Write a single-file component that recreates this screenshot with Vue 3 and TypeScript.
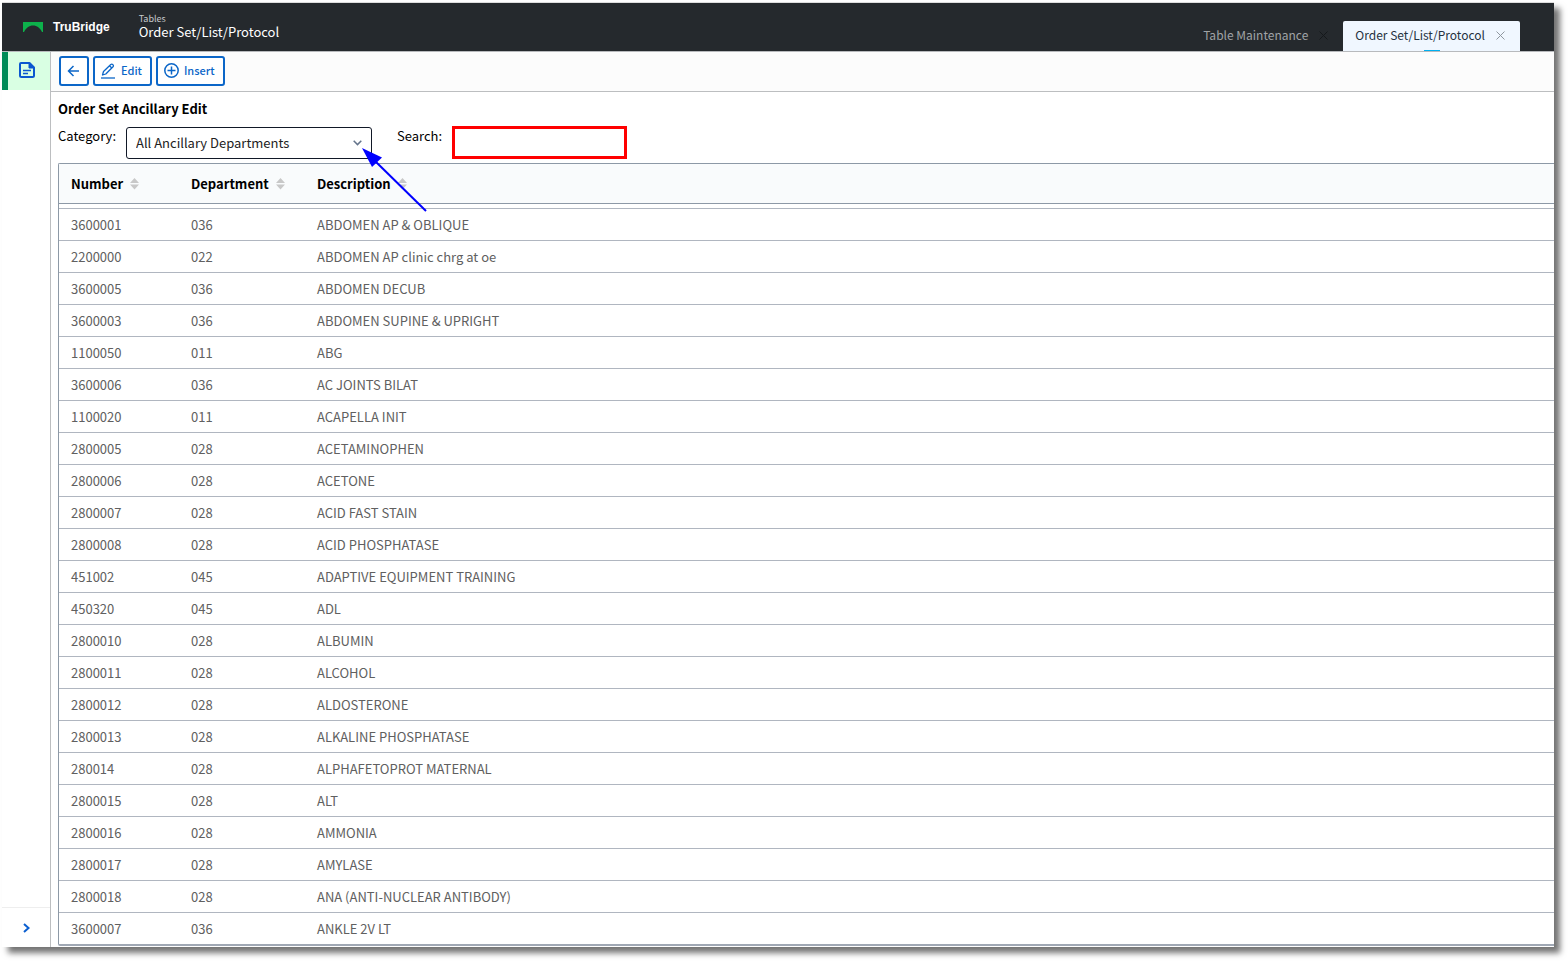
<script setup lang="ts">
import { ref } from 'vue'

interface OrderRow {
  number: string
  department: string
  description: string
}

const columns: string[] = ['Number', 'Department', 'Description']
const category = ref('all')
const search = ref('')

const rows: OrderRow[] = [
  ['3600001', '036', 'ABDOMEN AP & OBLIQUE'],
  ['2200000', '022', 'ABDOMEN AP clinic chrg at oe'],
  ['3600005', '036', 'ABDOMEN DECUB'],
  ['3600003', '036', 'ABDOMEN SUPINE & UPRIGHT'],
  ['1100050', '011', 'ABG'],
  ['3600006', '036', 'AC JOINTS BILAT'],
  ['1100020', '011', 'ACAPELLA INIT'],
  ['2800005', '028', 'ACETAMINOPHEN'],
  ['2800006', '028', 'ACETONE'],
  ['2800007', '028', 'ACID FAST STAIN'],
  ['2800008', '028', 'ACID PHOSPHATASE'],
  ['451002', '045', 'ADAPTIVE EQUIPMENT TRAINING'],
  ['450320', '045', 'ADL'],
  ['2800010', '028', 'ALBUMIN'],
  ['2800011', '028', 'ALCOHOL'],
  ['2800012', '028', 'ALDOSTERONE'],
  ['2800013', '028', 'ALKALINE PHOSPHATASE'],
  ['280014', '028', 'ALPHAFETOPROT MATERNAL'],
  ['2800015', '028', 'ALT'],
  ['2800016', '028', 'AMMONIA'],
  ['2800017', '028', 'AMYLASE'],
  ['2800018', '028', 'ANA (ANTI-NUCLEAR ANTIBODY)'],
  ['3600007', '036', 'ANKLE 2V LT'],
].map(([number, department, description]) => ({ number, department, description }))
</script>

<template>
  <div class="page">
    <div class="window">
      <header class="topbar">
        <svg class="logo" width="20" height="10" viewBox="0 0 20 10" aria-hidden="true">
          <path d="M0 0H20V10H19C17 6 14 3.500 10 3.500S3 6 1 10H0Z" fill="#0db14b" />
        </svg>
        <span class="brand">TruBridge</span>
        <div class="titles">
          <span class="crumb">Tables</span>
          <span class="title">Order Set/List/Protocol</span>
        </div>
        <nav class="tabs" aria-label="Open tabs">
          <div class="tab">
            <a href="#">Table Maintenance</a>
            <button type="button" class="close" aria-label="Close Table Maintenance">
              <svg width="9" height="9" viewBox="0 0 9 9"><path d="M.5 .5L8.5 8.5M8.5 .5L.5 8.5" /></svg>
            </button>
          </div>
          <div class="tab active">
            <a href="#" aria-current="page">Order Set/List/Protocol</a>
            <button type="button" class="close" aria-label="Close Order Set/List/Protocol">
              <svg width="9" height="9" viewBox="0 0 9 9"><path d="M.5 .5L8.5 8.5M8.5 .5L.5 8.5" /></svg>
            </button>
          </div>
        </nav>
      </header>

      <div class="body">
        <aside class="sidebar">
          <button type="button" class="side-item" aria-label="Document">
            <svg width="16" height="16" viewBox="0 0 16 16" fill="none" stroke="#0b57d0" stroke-width="2" stroke-linejoin="round">
              <path d="M2 1H10.5L15 5.5V13.5Q15 15 13.500 15H2.500Q1 15 1 13.500V2Q1 1 2 1Z" />
              <path d="M10 1V6H15Z" fill="#0b57d0" stroke-width="1" />
              <path d="M4 8.500H12M4 11.500H9" stroke-width="1.500" />
            </svg>
          </button>
          <button type="button" class="side-toggle" aria-label="Expand sidebar">
            <svg width="8" height="10" viewBox="0 0 8 10" fill="none" stroke="#0b5fd0" stroke-width="2">
              <path d="M2 1L6.500 5L2 9" />
            </svg>
          </button>
        </aside>

        <main class="main">
          <div class="toolbar">
            <button type="button" class="tool" aria-label="Back">
              <svg width="12" height="12" viewBox="0 0 12 12" fill="none" stroke="currentColor" stroke-width="1.500">
                <path d="M12 6H1.500M6.500 1L1.500 6L6.500 11" />
              </svg>
            </button>
            <button type="button" class="tool">
              <svg width="15" height="16" viewBox="0 0 15 16" fill="none" stroke="currentColor" stroke-width="1.300" stroke-linejoin="round">
                <path d="M1.500 12L2.500 8.500L9.800 1.500Q10.800 .7 11.800 1.600Q12.900 2.700 12 3.700L4.800 11L1.500 12ZM8.500 2.800L10.800 5" />
                <path d="M0 15H14" />
              </svg>
              <span>Edit</span>
            </button>
            <button type="button" class="tool">
              <svg width="15" height="15" viewBox="0 0 15 15" fill="none" stroke="currentColor" stroke-width="1.500">
                <circle cx="7.500" cy="7.500" r="6.700" />
                <path d="M7.500 3.500V11.500M3.500 7.500H11.500" />
              </svg>
              <span>Insert</span>
            </button>
          </div>

          <section class="content">
            <h1>Order Set Ancillary Edit</h1>
            <div class="filters">
              <label class="category-label" for="category">Category:</label>
              <div class="select-wrap">
                <select id="category" v-model="category">
                  <option value="all">All Ancillary Departments</option>
                </select>
                <svg class="chevron" width="9" height="6" viewBox="0 0 9 6" fill="none" stroke="#64748b" stroke-width="1.500">
                  <path d="M.7 .8L4.500 4.600L8.300 .8" />
                </svg>
                <svg class="pointer" width="66" height="66" viewBox="0 0 66 66" aria-hidden="true">
                  <path d="M12 12L64 63" stroke="#00f" stroke-width="2" />
                  <path d="M0 0L20 9.500L10 19Z" fill="#00f" />
                </svg>
              </div>
              <label class="search-label" for="search">Search:</label>
              <input id="search" v-model="search" type="text" />
            </div>

            <div class="table-frame">
              <table>
                <thead>
                  <tr>
                    <th v-for="column in columns" :key="column" scope="col">
                      <button type="button" class="sort">
                        {{ column }}
                        <svg width="9" height="12" viewBox="0 0 9 12" fill="#c8c8c8" aria-hidden="true">
                          <path d="M4.500 0L9 5H0ZM0 6.500H9L4.500 11.500Z" />
                        </svg>
                      </button>
                    </th>
                  </tr>
                </thead>
                <tbody>
                  <tr v-for="row in rows" :key="row.number">
                    <td>{{ row.number }}</td>
                    <td>{{ row.department }}</td>
                    <td>{{ row.description }}</td>
                  </tr>
                </tbody>
              </table>
            </div>
          </section>
        </main>
      </div>
    </div>
  </div>
</template>

<style>
body {
  margin: 0;
  background: #fff;
}
</style>

<style scoped>
* {
  box-sizing: border-box;
}

.page {
  min-height: 100vh;
  padding: 2px 14px 14px 2px;
  display: flex;
  font-family: "Noto Sans CJK SC", "Noto Sans", sans-serif;
  font-size: 13px;
  line-height: 20px;
  color: #000;
}

.window {
  flex: 1;
  min-width: 0;
  display: flex;
  flex-direction: column;
  background: #fff;
  border-top: 1px solid #ddd;
  box-shadow: 6px 6px 6px rgba(0, 0, 0, 0.55);
}

button {
  font: inherit;
  color: inherit;
  background: none;
  border: 0;
  padding: 0;
}

svg {
  display: block;
  flex: none;
}

.topbar {
  display: flex;
  align-items: center;
  height: 49px;
  padding: 0 34px 0 21px;
  background: #25292d;
  border-bottom: 1px solid #b8babd;
  color: #fff;
}

.brand {
  margin-left: 10px;
  font: bold 12px/20px "Liberation Sans", Arial, sans-serif;
}

.titles {
  display: flex;
  flex-direction: column;
  margin-left: 29px;
  padding-bottom: 2px;
}

.crumb {
  font-size: 9px;
  line-height: 12px;
  color: #c8cacc;
}

.title {
  line-height: 14px;
}

.tabs {
  display: flex;
  align-self: flex-end;
  margin-left: auto;
}

.tab {
  position: relative;
  display: flex;
  align-items: center;
  gap: 11px;
  height: 30px;
  padding: 0 15px 2px 12px;
  font-size: 12px;
  color: #a0a3a6;
}

.tab a {
  color: inherit;
  text-decoration: none;
}

.tab.active {
  background: #f0f7ff;
  color: #25323f;
  border-radius: 2px 2px 0 0;
}

.tab.active::after {
  content: "";
  position: absolute;
  bottom: 0;
  left: calc(50% - 8px);
  width: 16px;
  height: 1px;
  background: #00b0f0;
}

.close svg {
  fill: none;
  stroke: #15181b;
}

.active .close svg {
  stroke: #8f979f;
}

.body {
  flex: 1;
  display: flex;
}

.sidebar {
  flex: none;
  width: 49px;
  display: flex;
  flex-direction: column;
  justify-content: space-between;
  border-right: 1px solid #bcbec0;
}

.side-item {
  display: flex;
  align-items: center;
  height: 38px;
  padding: 0 0 2px 11px;
  background: #d9ffe3;
  border-left: 6px solid #008b57;
}

.side-toggle {
  display: flex;
  align-items: center;
  justify-content: center;
  height: 40px;
  border-top: 1px solid #eee;
}

.main {
  flex: 1;
  min-width: 0;
}

.toolbar {
  display: flex;
  align-items: center;
  gap: 4px;
  height: 40px;
  padding: 0 8px 2px;
  background: #fcfcfc;
  border-bottom: 1px solid #bcbec0;
}

.tool {
  display: flex;
  align-items: center;
  gap: 5px;
  height: 30px;
  padding: 0 8px 0 6px;
  color: #0b66c8;
  background: #fff;
  border: 2px solid currentColor;
  border-radius: 3px;
  font-size: 11px;
  line-height: 18px;
  font-weight: 500;
}

.tool span {
  padding-bottom: 2px;
}

.content {
  padding: 7px 0 0 7px;
}

h1 {
  margin: 0;
  font-size: 13px;
  line-height: 20px;
  font-weight: 700;
}

.filters {
  display: flex;
  align-items: flex-start;
  margin-top: 7px;
}

.category-label {
  width: 68px;
}

.search-label {
  width: 55px;
  margin-left: 25px;
}

.select-wrap {
  position: relative;
  width: 246px;
  padding-top: 1px;
}

select {
  display: block;
  width: 100%;
  height: 32px;
  padding: 0 28px 0 9px;
  appearance: none;
  font: inherit;
  color: #222;
  background: #fff;
  border: 1px solid #111827;
  border-radius: 3px;
}

.chevron {
  position: absolute;
  right: 10px;
  top: 14px;
}

.pointer {
  position: absolute;
  left: 236px;
  top: 22px;
  z-index: 1;
  pointer-events: none;
}

input {
  width: 175px;
  height: 33px;
  padding: 0 8px;
  font: inherit;
  background: #fff;
  border: 3px solid #f00;
}

.table-frame {
  margin-top: 4px;
  border: 1px solid #8d99a6;
  border-right: 0;
  border-bottom: 2px solid #a0a8b4;
  border-radius: 2px 0 0 2px;
}

table {
  width: 100%;
  table-layout: fixed;
  border-spacing: 0;
}

th,
td {
  padding: 0 0 0 12px;
  text-align: left;
}

th {
  height: 40px;
  background: #f9fbfc;
  border-bottom: 1px solid #8d99a6;
}

th:nth-child(1) {
  width: 120px;
}

th:nth-child(2) {
  width: 126px;
}

.sort {
  display: flex;
  align-items: center;
  gap: 7px;
  font-weight: 700;
}

tbody::before {
  content: "";
  display: block;
  height: 4px;
}

td {
  height: 32px;
  color: #606060;
  border-top: 1px solid #b0b6c0;
}
</style>
